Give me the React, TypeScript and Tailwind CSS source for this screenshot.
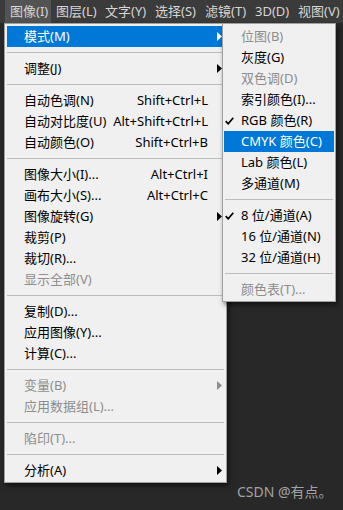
import React from "react";

type MenuItem =
  | { sep: true }
  | {
      sep?: false;
      label: string;
      shortcut?: string;
      arrow?: boolean;
      disabled?: boolean;
      active?: boolean;
    };

type SubItem =
  | { sep: true }
  | { sep?: false; label: string; check?: boolean; disabled?: boolean; active?: boolean };

const topMenus = [
  { label: "图像(I)", w: "w-[46px]", active: true },
  { label: "图层(L)", w: "w-[49px]" },
  { label: "文字(Y)", w: "w-[50px]" },
  { label: "选择(S)", w: "w-[50px]" },
  { label: "滤镜(T)", w: "w-[50px]" },
  { label: "3D(D)", w: "w-[43px]" },
  { label: "视图(V)", w: "w-[60px]" },
];

const mainItems: MenuItem[] = [
  { label: "模式(M)", arrow: true, active: true },
  { sep: true },
  { label: "调整(J)", arrow: true },
  { sep: true },
  { label: "自动色调(N)", shortcut: "Shift+Ctrl+L" },
  { label: "自动对比度(U)", shortcut: "Alt+Shift+Ctrl+L" },
  { label: "自动颜色(O)", shortcut: "Shift+Ctrl+B" },
  { sep: true },
  { label: "图像大小(I)...", shortcut: "Alt+Ctrl+I" },
  { label: "画布大小(S)...", shortcut: "Alt+Ctrl+C" },
  { label: "图像旋转(G)", arrow: true },
  { label: "裁剪(P)" },
  { label: "裁切(R)..." },
  { label: "显示全部(V)", disabled: true },
  { sep: true },
  { label: "复制(D)..." },
  { label: "应用图像(Y)..." },
  { label: "计算(C)..." },
  { sep: true },
  { label: "变量(B)", arrow: true, disabled: true },
  { label: "应用数据组(L)...", disabled: true },
  { sep: true },
  { label: "陷印(T)...", disabled: true },
  { sep: true },
  { label: "分析(A)", arrow: true },
];

const modeItems: SubItem[] = [
  { label: "位图(B)", disabled: true },
  { label: "灰度(G)" },
  { label: "双色调(D)", disabled: true },
  { label: "索引颜色(I)..." },
  { label: "RGB 颜色(R)", check: true },
  { label: "CMYK 颜色(C)", active: true },
  { label: "Lab 颜色(L)" },
  { label: "多通道(M)" },
  { sep: true },
  { label: "8 位/通道(A)", check: true },
  { label: "16 位/通道(N)" },
  { label: "32 位/通道(H)" },
  { sep: true },
  { label: "颜色表(T)...", disabled: true },
];

const Arrow = ({ color }: { color: string }) => (
  <svg width="5" height="9" viewBox="0 0 5 9">
    <path d="M0 0 L5 4.5 L0 9 Z" fill={color} />
  </svg>
);

const Check = () => (
  <svg width="9" height="8" viewBox="0 0 9 8">
    <path d="M0.7 4.2 L3.2 6.8 L8.3 0.7" stroke="#000" strokeWidth="1.7" fill="none" />
  </svg>
);

const Separator = ({ inset }: { inset: string }) => (
  <div className={`h-[11px] flex items-center ${inset}`}>
    <div className="h-px w-full bg-[#bdbdbd]" />
  </div>
);

export default function App() {
  return (
    <div
      className="relative w-[343px] h-[510px] overflow-hidden bg-[#282828] text-[13px]"
      style={{ fontFamily: '"Noto Sans", "Noto Sans CJK SC", sans-serif' }}
    >
      {/* Menu bar */}
      <div className="flex h-[23px] bg-[#3b3b3b] pl-[5px] text-[#d6d6d6] whitespace-nowrap">
        {topMenus.map((m) => (
          <div
            key={m.label}
            className={`${m.w} shrink-0 pl-[5px] leading-[23px] ${m.active ? "bg-[#535353]" : ""}`}
          >
            {m.label}
          </div>
        ))}
      </div>

      {/* Image menu */}
      <div className="absolute left-[4px] top-[23px] w-[223px] border border-[#a0a0a0] bg-[#f0f0f0] pt-[2px] pb-[1px] shadow-[2px_3px_5px_rgba(0,0,0,0.55)]">
        {mainItems.map((it, i) =>
          it.sep ? (
            <Separator key={i} inset="mx-[2px]" />
          ) : (
            <div
              key={i}
              className={`mx-[2px] flex h-[21px] items-center pl-[17px] leading-[21px] whitespace-nowrap ${
                it.active
                  ? "bg-[#0078d7] text-white"
                  : it.disabled
                  ? "text-[#8d8d8d]"
                  : "text-black"
              }`}
            >
              <span className="flex-1">{it.label}</span>
              {it.shortcut && <span>{it.shortcut}</span>}
              <span className="flex w-[16px] justify-end pr-[2px]">
                {it.arrow && (
                  <Arrow color={it.active ? "#ffffff" : it.disabled ? "#8d8d8d" : "#000000"} />
                )}
              </span>
            </div>
          )
        )}
      </div>

      {/* Mode submenu */}
      <div className="absolute left-[222px] top-[23px] w-[114px] border border-[#a0a0a0] bg-[#f0f0f0] pt-[2px] pb-[1px] shadow-[2px_3px_5px_rgba(0,0,0,0.5)]">
        {modeItems.map((it, i) =>
          it.sep ? (
            <Separator key={i} inset="mx-[2px]" />
          ) : (
            <div
              key={i}
              className={`mx-px flex h-[21px] items-center leading-[21px] whitespace-nowrap ${
                it.active
                  ? "bg-[#0078d7] text-white"
                  : it.disabled
                  ? "text-[#8d8d8d]"
                  : "text-black"
              }`}
            >
              <span className="flex w-[17px] shrink-0 justify-start pl-[1px]">{it.check && <Check />}</span>
              <span>{it.label}</span>
            </div>
          )
        )}
      </div>

      {/* Watermark */}
      <div className="absolute left-[237px] top-[482px] text-[14px] leading-[20px] text-[#a3a3a3] whitespace-nowrap">
        CSDN @有点。
      </div>
    </div>
  );
}
